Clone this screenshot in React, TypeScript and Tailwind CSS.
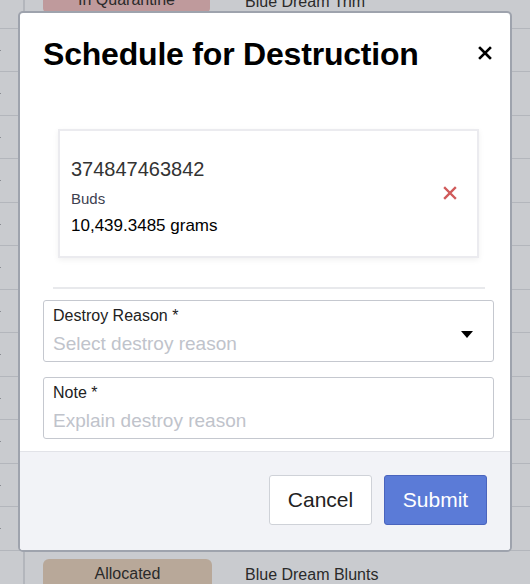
import React from 'react';

const font = { fontFamily: '"Liberation Sans", Arial, sans-serif' };

function BgRow({ h }: { h: string }) {
  return (
    <div className={`flex ${h} border-b border-[#b3b6bc] shrink-0`}>
      <div className="w-[25px] border-r-2 border-[#b3b6bc] shrink-0 flex items-center">
        <span className="w-[1px] h-[1px] bg-[#8a8d93]" />
      </div>
      <div className="flex-1" />
    </div>
  );
}

export default function App() {
  const heights = ['h-[43px]', 'h-[44px]', 'h-[43px]', 'h-[44px]', 'h-[43px]', 'h-[44px]', 'h-[43px]', 'h-[44px]', 'h-[43px]', 'h-[44px]', 'h-[43px]', 'h-[44px]'];
  return (
    <div className="relative w-[530px] h-[584px] overflow-hidden bg-[#c9cbcf]" style={font}>
      {/* table behind overlay */}
      <div className="flex flex-col">
        <div className="flex h-[29px] border-b border-[#b3b6bc] shrink-0">
          <div className="w-[25px] border-r-2 border-[#b3b6bc] shrink-0" />
          <div className="flex-1 flex items-start -mt-[12px]">
            <div className="ml-[18px] w-[167px] h-[24px] rounded bg-[#bf9a9c] flex items-center justify-center text-[16px] text-[#2a2a2a]">
              In Quarantine
            </div>
            <span className="ml-[35px] mt-[2px] text-[16px] text-[#2a2a2a]">Blue Dream Trim</span>
          </div>
        </div>
        {heights.map((h, i) => (
          <BgRow key={i} h={h} />
        ))}
        <div className="flex h-[60px] shrink-0">
          <div className="w-[25px] border-r-2 border-[#b3b6bc] shrink-0" />
          <div className="flex-1 flex items-start pt-[8px]">
            <div className="ml-[18px] w-[169px] h-[30px] rounded-md bg-[#b8a899] flex items-center justify-center text-[16px] text-[#2a2a2a]">
              Allocated
            </div>
            <span className="ml-[33px] mt-[4px] text-[16px] text-[#2a2a2a]">Blue Dream Blunts</span>
          </div>
        </div>
      </div>

      {/* modal */}
      <div className="absolute left-[18px] top-[11px] w-[494px] h-[541px] rounded-[5px] border-2 border-[#9ea3ad] bg-white flex flex-col overflow-hidden">
        <div className="flex items-start justify-between pl-[23px] pr-[18px] pt-[23px]">
          <h2 className="text-[32px] leading-[36px] font-bold text-black tracking-[-0.2px]">Schedule for Destruction</h2>
          <svg width="14" height="14" viewBox="0 0 14 14" className="mt-[10px]">
            <path d="M2 2 L12 12 M12 2 L2 12" stroke="#000" strokeWidth="2.6" strokeLinecap="square" />
          </svg>
        </div>

        <div className="pl-[38px] pr-[31px] pt-[57px]">
          <div className="border-2 border-[#ebebef] shadow-[0_2px_6px_rgba(0,0,0,0.06)] h-[129px] flex items-center justify-between pl-[11px] pr-[20px]">
            <div className="flex flex-col pt-[6px]">
              <span className="text-[20px] leading-[24px] text-[#333]">374847463842</span>
              <span className="mt-[9px] text-[15px] leading-[18px] text-[#3d4150]">Buds</span>
              <span className="mt-[8px] text-[17px] leading-[20px] text-black">10,439.3485 grams</span>
            </div>
            <svg width="14" height="14" viewBox="0 0 14 14" className="mb-[2px]">
              <path d="M2 2 L12 12 M12 2 L2 12" stroke="#d05a5a" strokeWidth="2.4" strokeLinecap="square" />
            </svg>
          </div>
        </div>

        <div className="ml-[33px] mr-[25px] mt-[29px] border-t-2 border-[#e8e9ec]" />

        <div className="pl-[23px] pr-[16px] pt-[11px] flex flex-col gap-[15px]">
          <div className="h-[62px] rounded-[3px] border border-[#c5c8cf] flex items-start justify-between pl-[9px] pr-[20px] pt-[6px]">
            <div className="flex flex-col">
              <span className="text-[16px] leading-[18px] text-[#222]">Destroy Reason *</span>
              <span className="mt-[8px] text-[19px] leading-[22px] text-[#c0c3cb]">Select destroy reason</span>
            </div>
            <svg width="12" height="7" viewBox="0 0 12 7" className="mt-[24px]">
              <path d="M0 0 L12 0 L6 7 Z" fill="#000" />
            </svg>
          </div>
          <div className="h-[62px] rounded-[3px] border border-[#c5c8cf] flex flex-col pl-[9px] pt-[6px]">
            <span className="text-[16px] leading-[18px] text-[#222]">Note *</span>
            <span className="mt-[8px] text-[19px] leading-[22px] text-[#c0c3cb]">Explain destroy reason</span>
          </div>
        </div>

        <div className="mt-auto h-[99px] bg-[#f2f3f7] border-t border-[#e2e3e8] flex items-center justify-end gap-[12px] pr-[23px] pb-[2px]">
          <button className="w-[103px] h-[50px] rounded-[3px] border border-[#cfd2d8] bg-white text-[21px] text-[#222]">
            Cancel
          </button>
          <button className="w-[103px] h-[50px] rounded-[3px] border border-[#4a64bd] bg-[#5b7bd7] text-[21px] text-white">
            Submit
          </button>
        </div>
      </div>
    </div>
  );
}
